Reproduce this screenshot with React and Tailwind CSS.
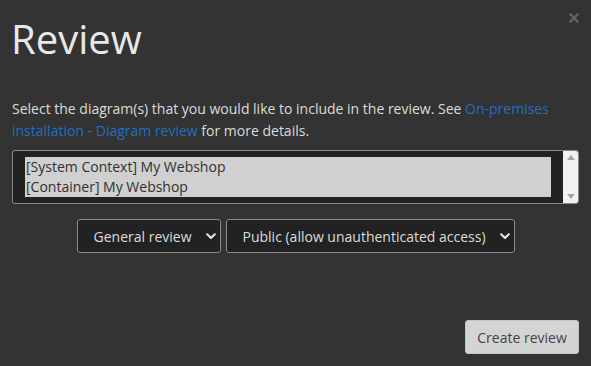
import React from "react";

function Chevron() {
  return (
    <svg width="10" height="7" viewBox="0 0 10 7" className="shrink-0">
      <path d="M1.2 1.3 L5 5 L8.8 1.3" fill="none" stroke="#e0e0e0" strokeWidth="2.2" strokeLinecap="round" strokeLinejoin="round" />
    </svg>
  );
}

export default function App() {
  return (
    <div className="w-[591px] h-[366px] bg-[#333333] relative overflow-hidden" style={{ fontFamily: '"Open Sans", sans-serif' }}>
      <svg className="absolute left-[569px] top-[13px]" width="10" height="10" viewBox="0 0 10 10">
        <path d="M1.5 1.5 L8.5 8.5 M8.5 1.5 L1.5 8.5" stroke="#5e5e5e" strokeWidth="2.6" strokeLinecap="square" />
      </svg>
      <div className="px-[12px] pt-[12px] flex flex-col">
        <h1 className="text-[40px] leading-[54px] text-[#e8e8e8] font-normal -ml-[1px]">Review</h1>
        <p className="mt-[32px] text-[14px] leading-[22px] text-[#dcdcdc]">
          Select the diagram(s) that you would like to include in the review. See{" "}
          <span className="text-[#1f6fc0]">On-premises installation - Diagram review</span> for more details.
        </p>
        <div className="mt-[8px] h-[54px] border border-[#8a8a8a] rounded-[3px] bg-[#222222] flex overflow-hidden">
          <div className="flex-1 pl-[12px] pr-[12px] pt-[6px]">
            <div className="bg-[#d0d0d0] text-[#303030] text-[14px] leading-[20px] pl-[1px]">
              <div>[System Context] My Webshop</div>
              <div>[Container] My Webshop</div>
            </div>
          </div>
          <div className="w-[15px] bg-[#f1f1f1] flex flex-col justify-between items-center py-[4px]">
            <svg width="8" height="5" viewBox="0 0 8 5"><path d="M0 5 L4 0 L8 5 Z" fill="#a3a3a3" /></svg>
            <svg width="8" height="5" viewBox="0 0 8 5"><path d="M0 0 L4 5 L8 0 Z" fill="#a3a3a3" /></svg>
          </div>
        </div>
        <div className="mt-[15px] flex justify-center gap-[5px]">
          <div className="h-[34px] w-[144px] border border-[#8a8a8a] rounded-[3px] bg-[#222222] flex items-center pl-[16px] pr-[4px] text-[14px] text-[#dcdcdc]">
            <span className="flex-1">General review</span>
            <Chevron />
          </div>
          <div className="h-[34px] w-[289px] border border-[#8a8a8a] rounded-[3px] bg-[#222222] flex items-center pl-[16px] pr-[4px] text-[14px] text-[#dcdcdc]">
            <span className="flex-1">Public (allow unauthenticated access)</span>
            <Chevron />
          </div>
        </div>
        <div className="mt-[67px] flex justify-end">
          <div className="h-[34px] w-[114px] justify-center bg-[#d4d4d4] rounded-[3px] text-[#444444] text-[14px] flex items-center border border-[#c4c4c4]">
            Create review
          </div>
        </div>
      </div>
    </div>
  );
}
